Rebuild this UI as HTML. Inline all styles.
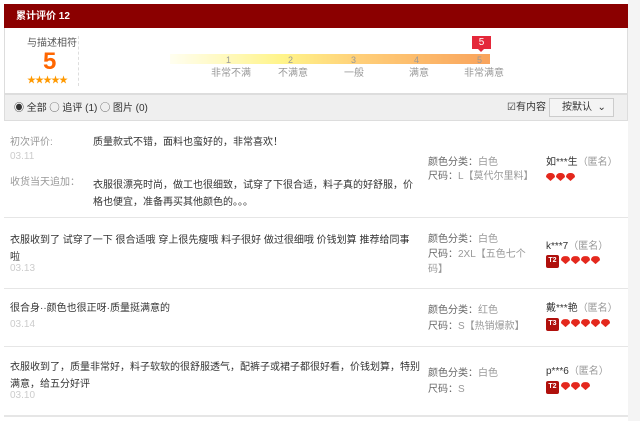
<!DOCTYPE html><html><head><meta charset="utf-8"><style>
*{margin:0;padding:0;box-sizing:border-box}
body{width:640px;height:421px;background:#fff;position:relative;overflow:hidden;font-family:"Liberation Sans","Noto Sans CJK SC",sans-serif;font-size:10px;color:#333}
.a{position:absolute;white-space:nowrap;line-height:12px}
.g{color:#999}.l{color:#ccc}
.sep{position:absolute;left:4px;width:624px;height:1px;background:#e6e6e6}
.h{display:inline-block;width:9px;height:8px;background:#e4281d;border-radius:4px 4px 1px 1px;margin-right:1px;clip-path:polygon(0 0,100% 0,100% 50%,50% 100%,0 50%)}
.bd{display:inline-block;width:13px;height:13px;background:#b0100c;color:#fff;font-size:7px;font-weight:bold;text-align:center;line-height:11px;border-radius:2px;vertical-align:middle;margin-right:2px}
</style></head><body>
<div style="position:absolute;left:628px;top:0;width:12px;height:421px;background:#f4f4f4"></div>
<div style="position:absolute;left:4px;top:4px;width:624px;height:24px;background:#8b0000"></div>
<div class="a" style="left:16px;top:11px;color:#fff;font-weight:bold;font-size:10px">累计评价 12</div>
<div style="position:absolute;left:4px;top:28px;width:624px;height:66px;border:1px solid #ddd;border-top:none"></div>
<div class="a" style="left:27px;top:38px;color:#555">与描述相符</div>
<div class="a" style="left:43px;top:50px;color:#ff6600;font-size:24px;font-weight:bold;line-height:24px">5</div>
<div class="a" style="left:27px;top:74px;color:#ff9900;font-size:9px;letter-spacing:-1px">★★★★★</div>
<div style="position:absolute;left:78px;top:36px;height:50px;border-left:1px dashed #ddd"></div>
<div style="position:absolute;left:170px;top:54px;width:320px;height:10px;background:linear-gradient(90deg,#fffef0,#fff48a 35%,#ffce78 60%,#f9a35c)"></div>
<div class="a" style="left:226px;top:54px;font-size:9px;color:#999">1</div>
<div class="a" style="left:288px;top:54px;font-size:9px;color:#999">2</div>
<div class="a" style="left:351px;top:54px;font-size:9px;color:#999">3</div>
<div class="a" style="left:414px;top:54px;font-size:9px;color:#999">4</div>
<div class="a" style="left:477px;top:54px;font-size:9px;color:#999">5</div>
<div class="a g" style="left:211px;top:68px">非常不满</div>
<div class="a g" style="left:278px;top:68px">不满意</div>
<div class="a g" style="left:344px;top:68px">一般</div>
<div class="a g" style="left:409px;top:68px">满意</div>
<div class="a g" style="left:464px;top:68px">非常满意</div>
<div style="position:absolute;left:472px;top:36px;width:19px;height:13px;background:#e4283a;color:#fff;text-align:center;line-height:13px;font-size:10px">5</div>
<div style="position:absolute;left:478px;top:49px;border:3px solid transparent;border-top-color:#e4283a"></div>
<div style="position:absolute;left:4px;top:94px;width:624px;height:27px;background:#efefef;border:1px solid #ddd"></div>
<div class="a" style="left:14px;top:103px;color:#333">◉ 全部 ◯ 追评 (1) ◯ 图片 (0)</div>
<div class="a" style="left:507px;top:102px;color:#333">☑有内容</div>
<div style="position:absolute;left:549px;top:98px;width:65px;height:19px;border:1px solid #ccc;background:#f4f4f4"></div>
<div class="a" style="left:562px;top:102px">按默认 &nbsp;⌄</div>

<div class="a g" style="left:10px;top:137px">初次评价:</div>
<div class="a l" style="left:10px;top:151px">03.11</div>
<div class="a" style="left:93px;top:137px">质量款式不错，面料也蛮好的，非常喜欢！</div>
<div class="a g" style="left:10px;top:177px">收货当天追加：</div>
<div class="a" style="left:93px;top:177px;line-height:17px">衣服很漂亮时尚，做工也很细致，试穿了下很合适，料子真的好舒服，价<br>格也便宜，准备再买其他颜色的。。。</div>
<div class="a" style="left:428px;top:156px;color:#666;line-height:14px">颜色分类：<span class="g">白色</span><br>尺码：<span class="g">L【莫代尔里料】</span></div>
<div class="a" style="left:546px;top:157px">如***生<span class="g">（匿名）</span></div>
<div class="a" style="left:546px;top:173px"><span class="h"></span><span class="h"></span><span class="h"></span></div>
<div class="sep" style="top:217px"></div>

<div class="a" style="left:10px;top:232px;line-height:17px">衣服收到了 试穿了一下 很合适哦 穿上很先瘦哦 料子很好 做过很细哦 价钱划算 推荐给同事<br>啦</div>
<div class="a l" style="left:10px;top:263px">03.13</div>
<div class="a" style="left:428px;top:232px;color:#666;line-height:15px">颜色分类：<span class="g">白色</span><br>尺码：<span class="g">2XL【五色七个<br>码】</span></div>
<div class="a" style="left:546px;top:241px">k***7<span class="g">（匿名）</span></div>
<div class="a" style="left:546px;top:255px"><span class="bd">T2</span><span class="h"></span><span class="h"></span><span class="h"></span><span class="h"></span></div>
<div class="sep" style="top:288px"></div>

<div class="a" style="left:10px;top:303px">很合身··颜色也很正呀·质量挺满意的</div>
<div class="a l" style="left:10px;top:319px">03.14</div>
<div class="a" style="left:428px;top:303px;color:#666;line-height:16px">颜色分类：<span class="g">红色</span><br>尺码：<span class="g">S【热销爆款】</span></div>
<div class="a" style="left:546px;top:303px">戴***艳<span class="g">（匿名）</span></div>
<div class="a" style="left:546px;top:318px"><span class="bd">T3</span><span class="h"></span><span class="h"></span><span class="h"></span><span class="h"></span><span class="h"></span></div>
<div class="sep" style="top:346px"></div>

<div class="a" style="left:10px;top:359px;line-height:17px">衣服收到了，质量非常好，料子软软的很舒服透气，配裤子或裙子都很好看，价钱划算，特别<br>满意，给五分好评</div>
<div class="a l" style="left:10px;top:390px">03.10</div>
<div class="a" style="left:428px;top:366px;color:#666;line-height:16px">颜色分类：<span class="g">白色</span><br>尺码：<span class="g">S</span></div>
<div class="a" style="left:546px;top:366px">p***6<span class="g">（匿名）</span></div>
<div class="a" style="left:546px;top:381px"><span class="bd">T2</span><span class="h"></span><span class="h"></span><span class="h"></span></div>
<div class="sep" style="top:415px;height:2px"></div>
</body></html>
